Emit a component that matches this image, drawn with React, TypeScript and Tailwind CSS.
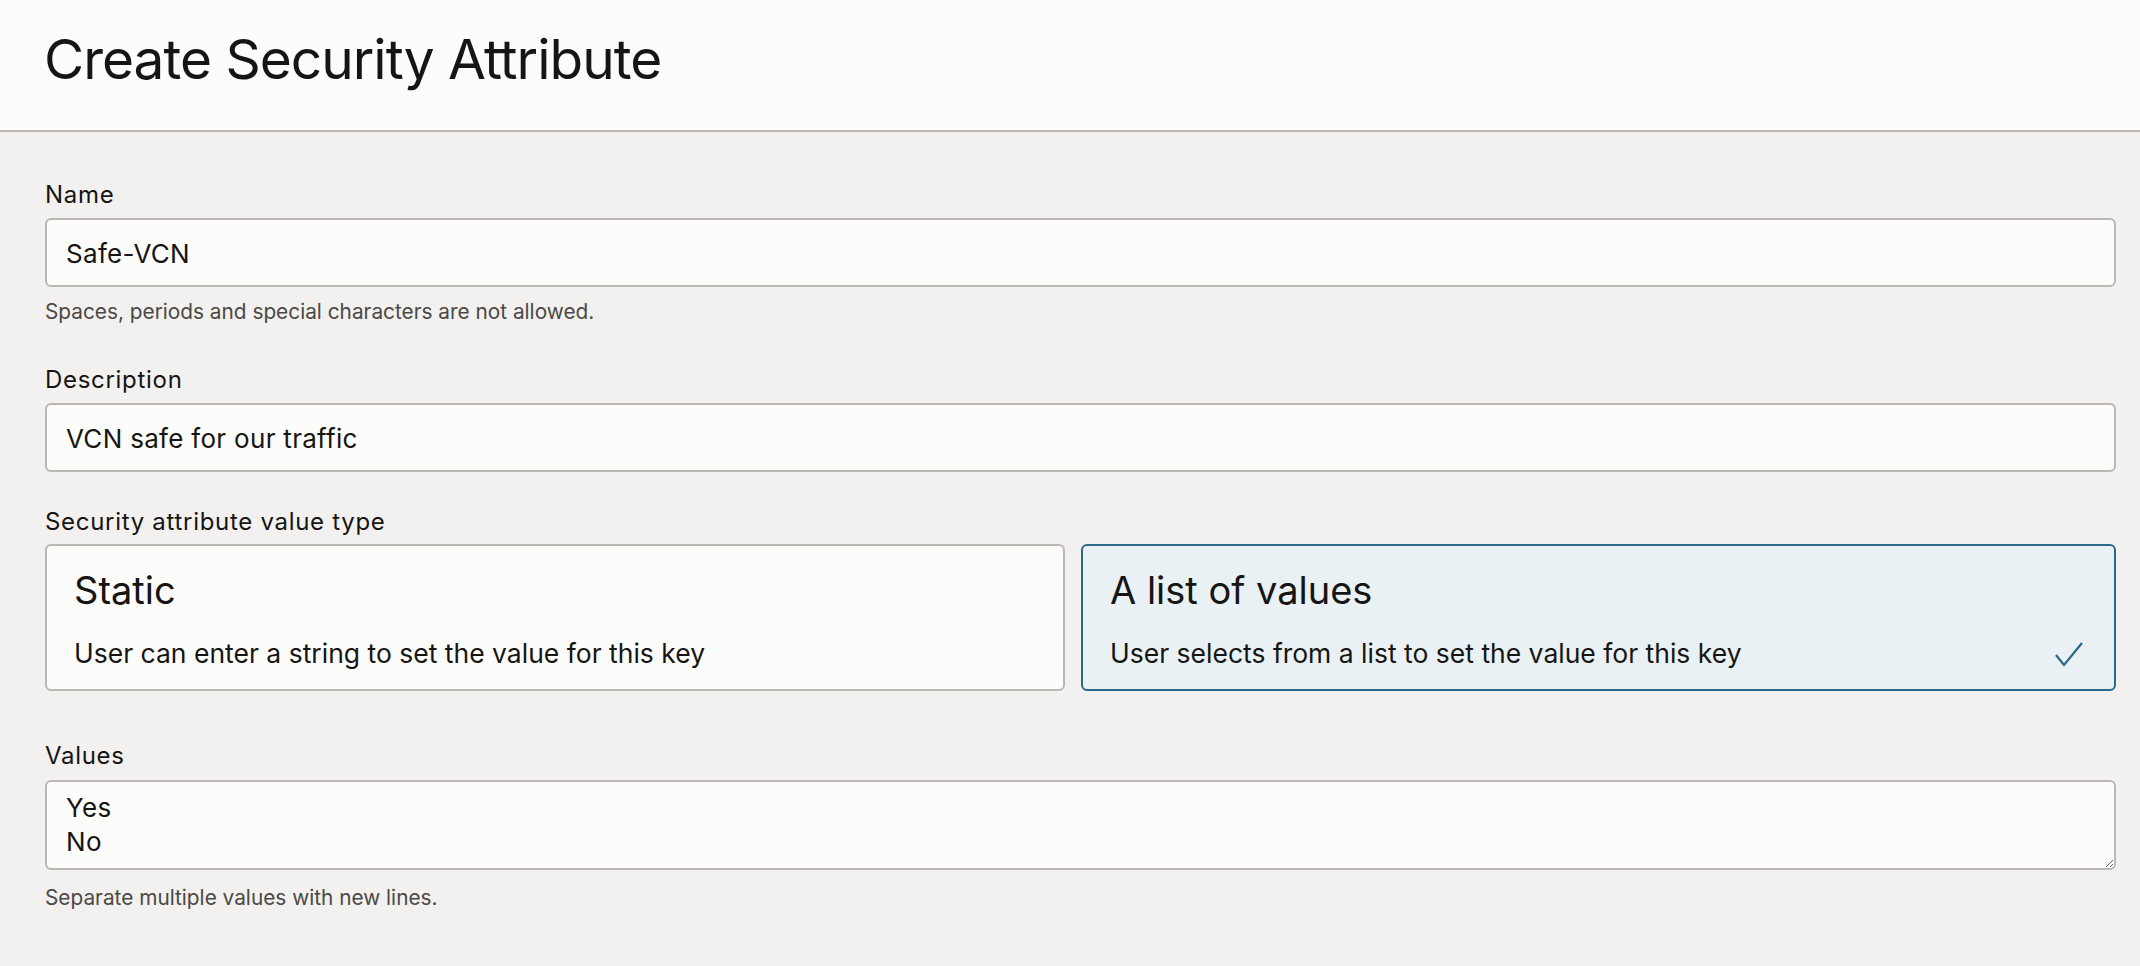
import React from "react";

const font = { fontFamily: "Inter, 'Liberation Sans', sans-serif" };

const Label: React.FC<{ text: string; className?: string }> = ({ text, className = "" }) => (
  <div className={`text-[24px] leading-[30px] tracking-[0.7px] text-[#161513] ${className}`}>{text}</div>
);

const Help: React.FC<{ text: string; className?: string }> = ({ text, className = "" }) => (
  <div className={`text-[20.8px] leading-[26px] text-[#4b4845] ${className}`}>{text}</div>
);

const TextField: React.FC<{ value: string }> = ({ value }) => (
  <input
    readOnly
    defaultValue={value}
    className="mt-[8px] h-[69px] w-full rounded-[6px] border-2 border-[#bcb7b2] bg-[#fcfcfb] pl-[19px] pt-[2px] text-[26px] tracking-[0.3px] text-[#161513] outline-none"
  />
);

const TypeCard: React.FC<{ title: string; body: string; selected?: boolean }> = ({ title, body, selected }) => (
  <div
    className={`flex h-[147px] flex-col rounded-[6px] border-2 pl-[27px] pr-[30px] pt-[21px] ${
      selected ? "border-[#2d6888] bg-[#e9f1f4]" : "border-[#bcb7b2] bg-[#fcfcfb]"
    }`}
  >
    <div className="text-[38px] leading-[46px] text-[#161513]">{title}</div>
    <div className="mt-[24px] flex items-center justify-between">
      <span className="text-[26.5px] leading-[32px] text-[#161513]">{body}</span>
      {selected && (
        <svg width="30" height="26" viewBox="0 0 30 26" className="mt-[1px]">
          <polyline points="2,14 10,24 28,2" fill="none" stroke="#2d6888" strokeWidth="2.2" />
        </svg>
      )}
    </div>
  </div>
);

export default function App() {
  return (
    <div className="min-h-[966px] w-full bg-[#f2f1ef]" style={font}>
      <header className="h-[132px] border-b-2 border-[#bcb6b0] bg-[#fcfcfb] pl-[44px] pt-[26px]">
        <h1 className="text-[55px] leading-[66px] tracking-[-1px] text-[#161513]">Create Security Attribute</h1>
      </header>

      <main className="pl-[45px] pr-[24px] pt-[48px]">
        <Label text="Name" />
        <TextField value="Safe-VCN" />
        <Help text="Spaces, periods and special characters are not allowed." className="mt-[12px]" />

        <Label text="Description" className="mt-[40px]" />
        <TextField value="VCN safe for our traffic" />

        <Label text="Security attribute value type" className="mt-[35px]" />
        <div className="mt-[7px] grid grid-cols-[1020fr_1035fr] gap-[16px]">
          <TypeCard title="Static" body="User can enter a string to set the value for this key" />
          <TypeCard title="A list of values" body="User selects from a list to set the value for this key" selected />
        </div>

        <Label text="Values" className="mt-[50px]" />
        <textarea
          readOnly
          defaultValue={"Yes\nNo"}
          className="mt-[9px] block h-[90px] w-full resize-y rounded-[6px] border-2 border-[#bcb7b2] bg-[#fcfcfb] pl-[19px] pt-[9px] text-[26px] leading-[34px] tracking-[0.3px] text-[#161513] outline-none"
        />
        <Help text="Separate multiple values with new lines." className="mt-[15px]" />
      </main>
    </div>
  );
}
